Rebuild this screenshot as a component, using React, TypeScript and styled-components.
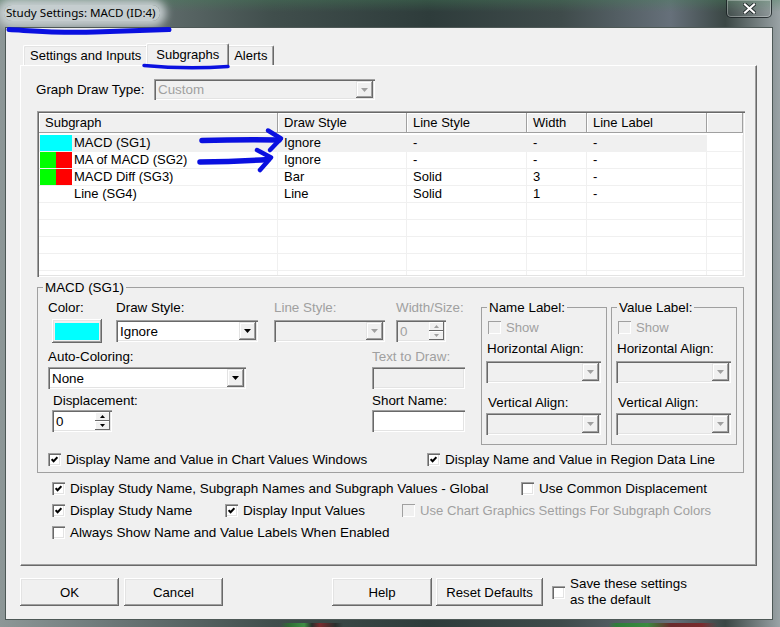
import React from "react";
import styled, { createGlobalStyle } from "styled-components";

const GlobalStyle = createGlobalStyle`
  html, body { margin: 0; padding: 0; background: #1e2624; }
  * { box-sizing: border-box; }
  body {
    font-family: "Liberation Sans", Arial, sans-serif;
    font-size: 13px;
    color: #000;
  }
`;

// window frame
const Window = styled.div`
  position: relative;
  width: 780px;
  height: 627px;
  display: flex;
  flex-direction: column;
  overflow: hidden;
  background:
    linear-gradient(90deg, transparent 0 36%, #2f6b35 37%, #3f8f45 39%, #2a2f2d 40%, #7a2b2e 41%, #2a2f2d 43%, transparent 44%, transparent 78%, #2e7d3a 79%, #3a8a40 83%, #6a2a2c 86%, #7a2b2e 90%, transparent 92%) bottom / 100% 4px no-repeat,
    linear-gradient(180deg, rgba(70, 130, 90, 0.35) 0, rgba(0, 0, 0, 0) 12px),
    linear-gradient(90deg, #8d9797 0%, #6a7676 15%, #404e4c 35%, #2e3c3b 55%, #3f4b4b 72%, #66707a 86%, #3b4745 93%, #9aa3a6 100%);
`;

const TitleBar = styled.div`
  height: 27px;
  flex: none;
  display: flex;
  align-items: flex-start;
  justify-content: space-between;
  padding: 0 8px 0 4px;
`;

const TitleText = styled.div`
  margin-top: 5px;
  padding: 0 4px 0 2px;
  font-family: "Noto Sans", "Liberation Sans", sans-serif;
  font-size: 11.6px;
  line-height: 16px;
  color: #000;
  background: rgba(204, 212, 214, 0.92);
  border-radius: 8px;
  box-shadow: 0 0 8px 6px rgba(204, 212, 214, 0.92);
`;

const CloseButton = styled.div`
  width: 46px;
  height: 18px;
  border: 1px solid rgba(20, 28, 30, 0.8);
  border-top: none;
  border-radius: 0 0 5px 5px;
  box-shadow: inset 0 0 0 1px rgba(255, 255, 255, 0.3);
  background: linear-gradient(180deg, rgba(255, 255, 255, 0.1), rgba(255, 255, 255, 0.02));
  display: flex;
  align-items: center;
  justify-content: center;
`;

const Client = styled.div`
  flex: 1;
  margin: 0 7px 7px 5px;
  background: #f0f0f0;
  border: 1px solid #4d5856;
  padding: 15px 15px 13px 14px;
  display: flex;
  flex-direction: column;
`;

// tabs
const TabStrip = styled.div`
  height: 22px;
  flex: none;
  display: flex;
  align-items: flex-end;
  padding-left: 3px;
  position: relative;
  z-index: 1;
`;

const Tab = styled.div<{ $active?: boolean }>`
  position: relative;
  z-index: ${(p) => (p.$active ? 2 : 1)};
  height: ${(p) => (p.$active ? 23 : 20)}px;
  margin: 0 ${(p) => (p.$active ? -2 : 0)}px ${(p) => (p.$active ? -1 : 0)}px;
  padding: 0 ${(p) => (p.$active ? 9 : 6)}px ${(p) => (p.$active ? 1 : 0)}px;
  display: flex;
  align-items: center;
  background: #f0f0f0;
  border-top: 1px solid #fff;
  border-left: 1px solid #fff;
  border-right: 1px solid #696969;
  border-radius: 2px 2px 0 0;
  box-shadow: inset -1px 0 #a0a0a0, inset 1px 1px #e3e3e3;
  white-space: nowrap;
`;

const TabPanel = styled.div`
  height: 501px;
  flex: none;
  border: 1px solid;
  border-color: #fff #696969 #696969 #fff;
  box-shadow: inset -1px -1px #a0a0a0;
  padding: 13px 12px 0 15px;
  display: flex;
  flex-direction: column;
  align-items: flex-start;
`;

const FormRow = styled.div<{ $cols: string; $mt?: number; $h?: number }>`
  display: grid;
  grid-template-columns: ${(p) => p.$cols};
  align-items: ${(p) => (p.$h ? "center" : "start")};
  margin-top: ${(p) => p.$mt ?? 0}px;
  ${(p) => (p.$h ? `height: ${p.$h}px;` : "")}
`;

const Label = styled.div<{ $disabled?: boolean; $mt?: number; $indent?: number }>`
  font-size: 13.4px;
  line-height: 15px;
  height: 15px;
  white-space: nowrap;
  color: ${(p) => (p.$disabled ? "#a0a0a0" : "#000")};
  margin-top: ${(p) => p.$mt ?? 0}px;
  padding-left: ${(p) => p.$indent ?? 0}px;
`;

// combo box
const Combo = styled.div<{ $w: number; $h: number; $disabled?: boolean; $mt?: number }>`
  width: ${(p) => p.$w}px;
  height: ${(p) => p.$h}px;
  flex: none;
  margin-top: ${(p) => p.$mt ?? 0}px;
  display: flex;
  padding: 2px;
  background: ${(p) => (p.$disabled ? "#f0f0f0" : "#fff")};
  box-shadow: inset 1px 1px #a0a0a0, inset 2px 2px #696969, inset -1px -1px #fff, inset -2px -2px #e3e3e3;
`;

const ComboValue = styled.div<{ $disabled?: boolean }>`
  flex: 1;
  padding-left: 2px;
  display: flex;
  align-items: center;
  white-space: nowrap;
  overflow: hidden;
  font-size: 13.4px;
  color: ${(p) => (p.$disabled ? "#a0a0a0" : "#000")};
`;

const DropButton = styled.div`
  width: 17px;
  flex: none;
  background: #f0f0f0;
  box-shadow: inset -1px -1px #696969, inset 1px 1px #e3e3e3, inset -2px -2px #a0a0a0, inset 2px 2px #fff;
  display: flex;
  align-items: center;
  justify-content: center;
`;

// spin box
const SpinButtons = styled.div`
  width: 15px;
  flex: none;
  display: flex;
  flex-direction: column;
`;

const SpinBtn = styled.div`
  flex: 1;
  background: #f0f0f0;
  box-shadow: inset -1px -1px #696969, inset 1px 1px #fff;
  display: flex;
  align-items: center;
  justify-content: center;
`;

const TextBox = styled.div<{ $w: number; $disabled?: boolean }>`
  width: ${(p) => p.$w}px;
  height: 22px;
  background: ${(p) => (p.$disabled ? "#f0f0f0" : "#fff")};
  box-shadow: inset 1px 1px #a0a0a0, inset 2px 2px #696969, inset -1px -1px #fff, inset -2px -2px #e3e3e3;
`;

// list view
const ListView = styled.div`
  margin: 11px 0 0 1px;
  width: 708px;
  height: 166px;
  padding: 2px;
  background: #fff;
  box-shadow: inset 1px 1px #a0a0a0, inset 2px 2px #696969, inset -1px -1px #fff, inset -2px -2px #e3e3e3;
  display: flex;
  flex-direction: column;
  overflow: hidden;
`;

const listCols = "239px 129px 120px 60px 120px 1fr";

const ListHeader = styled.div`
  display: grid;
  grid-template-columns: ${listCols};
  height: 20px;
  flex: none;
`;

const HeaderCell = styled.div`
  background: #f0f0f0;
  border-right: 1px solid #a0a0a0;
  border-bottom: 1px solid #a0a0a0;
  box-shadow: inset 1px 1px #fff;
  padding-left: 6px;
  display: flex;
  align-items: center;
  white-space: nowrap;
`;

const ListBody = styled.div`
  flex: 1;
  overflow: hidden;
  padding-top: 2px;
`;

const ListRow = styled.div<{ $selected?: boolean }>`
  display: grid;
  grid-template-columns: ${listCols};
  height: 17px;
  background: ${(p) => (p.$selected ? "#f0f0f0" : "#fff")};
  & > div:last-child { background: #fff; }
`;

const Cell = styled.div`
  border-right: 1px solid #f0f0f0;
  border-bottom: 1px solid #f0f0f0;
  padding-left: 6px;
  line-height: 16px;
  white-space: nowrap;
  overflow: hidden;
`;

const NameCell = styled(Cell)`
  padding-left: 1px;
  display: flex;
  gap: 2px;
`;

const SwatchGroup = styled.div`
  width: 32px;
  height: 16px;
  flex: none;
  display: flex;
`;

const Swatch = styled.div<{ $color: string }>`
  flex: 1;
  background: ${(p) => p.$color};
`;

// group boxes
const GroupBox = styled.fieldset<{ $w: number; $h?: number; $ml?: number; $mt?: number }>`
  margin: ${(p) => p.$mt ?? 0}px 0 0 ${(p) => p.$ml ?? 0}px;
  padding: 0;
  min-width: 0;
  flex: none;
  width: ${(p) => p.$w}px;
  ${(p) => (p.$h ? `height: ${p.$h}px;` : "")}
  border: 1px solid #a0a0a0;
`;

const GroupLegend = styled.legend`
  margin-left: 5px;
  padding: 0 2px;
  line-height: 15px;
  font-size: 13.4px;
`;

const GroupBody = styled.div`
  padding: 5px 6px 5px 10px;
`;

const TopPart = styled.div`
  height: 145px;
  display: flex;
  align-items: flex-start;
`;

const LeftArea = styled.div`
  width: 417px;
  flex: none;
  display: flex;
  flex-direction: column;
`;

const Field = styled.div<{ $gap: number; $indent?: number }>`
  display: flex;
  flex-direction: column;
  align-items: flex-start;
  gap: ${(p) => p.$gap}px;
  padding-left: ${(p) => p.$indent ?? 0}px;
`;

const LabelStack = styled.div`
  display: flex;
  flex-direction: column;
  align-items: flex-start;
  padding: 0 4px;
`;

const ColorButton = styled.div`
  margin: -1px 0 0 4px;
  width: 50px;
  height: 24px;
  background: #f0f0f0;
  box-shadow: inset -1px -1px #696969, inset 1px 1px #fff, inset -2px -2px #a0a0a0, inset 2px 2px #e3e3e3;
  display: flex;
  align-items: center;
  justify-content: center;
`;

const ColorFill = styled.div<{ $color: string }>`
  width: 44px;
  height: 17px;
  background: ${(p) => p.$color};
`;

// checkboxes
const CheckItem = styled.div<{ $disabled?: boolean; $mt?: number; $indent?: number }>`
  display: flex;
  align-items: center;
  gap: 5px;
  height: 15px;
  font-size: ${(p) => (p.$disabled ? 13.1 : 13.5)}px;
  white-space: nowrap;
  margin-top: ${(p) => p.$mt ?? 0}px;
  margin-left: ${(p) => p.$indent ?? 0}px;
  color: ${(p) => (p.$disabled ? "#a0a0a0" : "#000")};
`;

const Box = styled.span<{ $disabled?: boolean }>`
  width: 13px;
  height: 13px;
  flex: none;
  display: inline-flex;
  align-items: center;
  justify-content: center;
  background: ${(p) => (p.$disabled ? "#f0f0f0" : "#fff")};
  box-shadow: ${(p) =>
    p.$disabled
      ? "inset 1px 1px #a0a0a0, inset -1px -1px #fff"
      : "inset 1px 1px #a0a0a0, inset 2px 2px #696969, inset -1px -1px #fff, inset -2px -2px #e3e3e3"};
`;

const CheckLine = styled.div<{ $cols: string; $mt?: number }>`
  display: grid;
  grid-template-columns: ${(p) => p.$cols};
  align-items: center;
  margin-top: ${(p) => p.$mt ?? 0}px;
`;

const GlobalChecks = styled.div`
  margin: 8px 0 0 16px;
  display: flex;
  flex-direction: column;
  gap: 7px;
`;

// bottom buttons
const ButtonRow = styled.div`
  margin-top: 12px;
  height: 28px;
  flex: none;
  display: flex;
  align-items: center;
`;

const PushButton = styled.div<{ $w: number; $ml?: number }>`
  width: ${(p) => p.$w}px;
  height: 28px;
  margin-left: ${(p) => p.$ml ?? 0}px;
  background: #f0f0f0;
  box-shadow: inset -1px -1px #696969, inset 1px 1px #fff, inset -2px -2px #a0a0a0, inset 2px 2px #e3e3e3;
  display: flex;
  align-items: center;
  justify-content: center;
  white-space: nowrap;
  font-size: 13.2px;
`;

const SaveDefault = styled.div`
  margin-left: 9px;
  display: flex;
  align-items: center;
  gap: 5px;
  line-height: 16px;
  font-size: 13.4px;
`;

const Annotations = styled.svg`
  position: absolute;
  left: 0;
  top: 0;
  pointer-events: none;
  z-index: 10;
`;

type Row = {
  name: string;
  colors: string[];
  draw: string;
  line: string;
  width: string;
  label: string;
  selected?: boolean;
};

const rows: Row[] = [
  { name: "MACD (SG1)", colors: ["#00ffff"], draw: "Ignore", line: "-", width: "-", label: "-", selected: true },
  { name: "MA of MACD (SG2)", colors: ["#00ff00", "#ff0000"], draw: "Ignore", line: "-", width: "-", label: "-" },
  { name: "MACD Diff (SG3)", colors: ["#00ff00", "#ff0000"], draw: "Bar", line: "Solid", width: "3", label: "-" },
  { name: "Line (SG4)", colors: [], draw: "Line", line: "Solid", width: "1", label: "-" },
];

function Arrow({ disabled }: { disabled?: boolean }) {
  return (
    <svg width="7" height="4" viewBox="0 0 7 4">
      <polygon points="0,0 7,0 3.5,4" fill={disabled ? "#a0a0a0" : "#000"} />
    </svg>
  );
}

function ComboBox(props: { w: number; h?: number; value?: string; disabled?: boolean; mt?: number }) {
  return (
    <Combo $w={props.w} $h={props.h ?? 22} $disabled={props.disabled} $mt={props.mt}>
      <ComboValue $disabled={props.disabled}>{props.value}</ComboValue>
      <DropButton>
        <Arrow disabled={props.disabled} />
      </DropButton>
    </Combo>
  );
}

function SpinBox(props: { w: number; value: string; disabled?: boolean }) {
  const c = props.disabled ? "#a0a0a0" : "#000";
  return (
    <Combo $w={props.w} $h={22} $disabled={props.disabled}>
      <ComboValue $disabled={props.disabled}>{props.value}</ComboValue>
      <SpinButtons>
        <SpinBtn>
          <svg width="5" height="3" viewBox="0 0 5 3"><polygon points="2.5,0 5,3 0,3" fill={c} /></svg>
        </SpinBtn>
        <SpinBtn>
          <svg width="5" height="3" viewBox="0 0 5 3"><polygon points="0,0 5,0 2.5,3" fill={c} /></svg>
        </SpinBtn>
      </SpinButtons>
    </Combo>
  );
}

function Check(props: { checked?: boolean; disabled?: boolean; mt?: number; indent?: number; children?: React.ReactNode }) {
  return (
    <CheckItem $disabled={props.disabled} $mt={props.mt} $indent={props.indent}>
      <Box $disabled={props.disabled}>
        {props.checked && (
          <svg width="7" height="7" viewBox="0 0 7 7">
            <path d="M0.6 3.2 L2.6 5.2 L6.4 1.2" stroke="#000" strokeWidth="2" fill="none" />
          </svg>
        )}
      </Box>
      {props.children}
    </CheckItem>
  );
}

function LabelGroup({ title, ml }: { title: string; ml: number }) {
  return (
    <GroupBox $w={126} $h={145} $ml={ml}>
      <GroupLegend>{title}</GroupLegend>
      <LabelStack>
        <Check disabled mt={5} indent={2}>Show</Check>
        <Label $mt={6} $indent={1}>Horizontal Align:</Label>
        <ComboBox w={115} disabled mt={5} />
        <Label $mt={12} $indent={2}>Vertical Align:</Label>
        <ComboBox w={115} disabled mt={3} />
      </LabelStack>
    </GroupBox>
  );
}

export default function App() {
  return (
    <>
      <GlobalStyle />
      <Window>
        <TitleBar>
          <TitleText>Study Settings: MACD (ID:4)</TitleText>
          <CloseButton>
            <svg width="13" height="11" viewBox="0 0 13 11">
              <path d="M2 1.5 L11 9.5 M11 1.5 L2 9.5" stroke="#1d2526" strokeWidth="3.8" strokeLinecap="square" />
              <path d="M2 1.5 L11 9.5 M11 1.5 L2 9.5" stroke="#fff" strokeWidth="2.2" strokeLinecap="square" />
            </svg>
          </CloseButton>
        </TitleBar>

        <Client>
          <TabStrip>
            <Tab>Settings and Inputs</Tab>
            <Tab $active>Subgraphs</Tab>
            <Tab>Alerts</Tab>
          </TabStrip>

          <TabPanel>
            <FormRow $cols="118px 221px" $h={21}>
              <Label>Graph Draw Type:</Label>
              <ComboBox w={221} h={21} value="Custom" disabled />
            </FormRow>

            <ListView>
              <ListHeader>
                <HeaderCell>Subgraph</HeaderCell>
                <HeaderCell>Draw Style</HeaderCell>
                <HeaderCell>Line Style</HeaderCell>
                <HeaderCell>Width</HeaderCell>
                <HeaderCell>Line Label</HeaderCell>
                <HeaderCell />
              </ListHeader>
              <ListBody>
                {rows.map((r) => (
                  <ListRow key={r.name} $selected={r.selected}>
                    <NameCell>
                      <SwatchGroup>
                        {r.colors.map((c, i) => (
                          <Swatch key={i} $color={c} />
                        ))}
                      </SwatchGroup>
                      {r.name}
                    </NameCell>
                    <Cell>{r.draw}</Cell>
                    <Cell>{r.line}</Cell>
                    <Cell>{r.width}</Cell>
                    <Cell>{r.label}</Cell>
                    <Cell />
                  </ListRow>
                ))}
                {Array.from({ length: 6 }).map((_, i) => (
                  <ListRow key={"e" + i}>
                    <Cell />
                    <Cell />
                    <Cell />
                    <Cell />
                    <Cell />
                    <Cell />
                  </ListRow>
                ))}
              </ListBody>
            </ListView>

            <GroupBox $w={707} $ml={1} $mt={3}>
              <GroupLegend>MACD (SG1)</GroupLegend>
              <GroupBody>
                <TopPart>
                  <LeftArea>
                    <FormRow $cols="68px 158px 122px 69px">
                      <Field $gap={5}>
                        <Label>Color:</Label>
                        <ColorButton>
                          <ColorFill $color="#00ffff" />
                        </ColorButton>
                      </Field>
                      <Field $gap={5}>
                        <Label>Draw Style:</Label>
                        <ComboBox w={142} value="Ignore" />
                      </Field>
                      <Field $gap={5}>
                        <Label $disabled>Line Style:</Label>
                        <ComboBox w={111} disabled />
                      </Field>
                      <Field $gap={5}>
                        <Label $disabled>Width/Size:</Label>
                        <SpinBox w={50} value="0" disabled />
                      </Field>
                    </FormRow>
                    <FormRow $cols="324px 93px" $mt={6}>
                      <Field $gap={3}>
                        <Label>Auto-Coloring:</Label>
                        <ComboBox w={198} value="None" />
                      </Field>
                      <Field $gap={3}>
                        <Label $disabled>Text to Draw:</Label>
                        <TextBox $w={93} $disabled />
                      </Field>
                    </FormRow>
                    <FormRow $cols="324px 93px" $mt={4}>
                      <Field $gap={2} $indent={4}>
                        <Label $indent={1}>Displacement:</Label>
                        <SpinBox w={60} value="0" />
                      </Field>
                      <Field $gap={2}>
                        <Label>Short Name:</Label>
                        <TextBox $w={93} />
                      </Field>
                    </FormRow>
                  </LeftArea>
                  <LabelGroup title="Name Label:" ml={16} />
                  <LabelGroup title="Value Label:" ml={4} />
                </TopPart>
                <CheckLine $cols="379px auto" $mt={7}>
                  <Check checked>Display Name and Value in Chart Values Windows</Check>
                  <Check checked>Display Name and Value in Region Data Line</Check>
                </CheckLine>
              </GroupBody>
            </GroupBox>

            <GlobalChecks>
              <CheckLine $cols="469px auto">
                <Check checked>Display Study Name, Subgraph Names and Subgraph Values - Global</Check>
                <Check>Use Common Displacement</Check>
              </CheckLine>
              <CheckLine $cols="173px 177px auto">
                <Check checked>Display Study Name</Check>
                <Check checked>Display Input Values</Check>
                <Check disabled>Use Chart Graphics Settings For Subgraph Colors</Check>
              </CheckLine>
              <CheckLine $cols="auto">
                <Check>Always Show Name and Value Labels When Enabled</Check>
              </CheckLine>
            </GlobalChecks>
          </TabPanel>

          <ButtonRow>
            <PushButton $w={99}>OK</PushButton>
            <PushButton $w={99} $ml={5}>Cancel</PushButton>
            <PushButton $w={100} $ml={109}>Help</PushButton>
            <PushButton $w={107} $ml={4}>Reset Defaults</PushButton>
            <SaveDefault>
              <Box />
              <div>
                Save these settings
                <br />
                as the default
              </div>
            </SaveDefault>
          </ButtonRow>
        </Client>

        <Annotations width="780" height="627" viewBox="0 0 780 627">
          <g stroke="#0a10e0" fill="none" strokeLinecap="round" strokeLinejoin="round">
            <path d="M9 29.5 C 35 31, 60 33.5, 95 32 C 125 31, 150 30, 169 29.5" strokeWidth="5" />
            <path d="M144 65.5 Q 186 69.5 228 66.5" strokeWidth="3.5" />
            <path d="M202 140.5 Q 240 139.5 279 140" strokeWidth="5.5" />
            <path d="M268 130.5 L 281 138.5 L 270 150" strokeWidth="4.5" />
            <path d="M200 162 Q 235 161.5 268 159.5" strokeWidth="5.5" />
            <path d="M257 150 L 271 157.5 L 260 170" strokeWidth="4.5" />
          </g>
        </Annotations>
      </Window>
    </>
  );
}
